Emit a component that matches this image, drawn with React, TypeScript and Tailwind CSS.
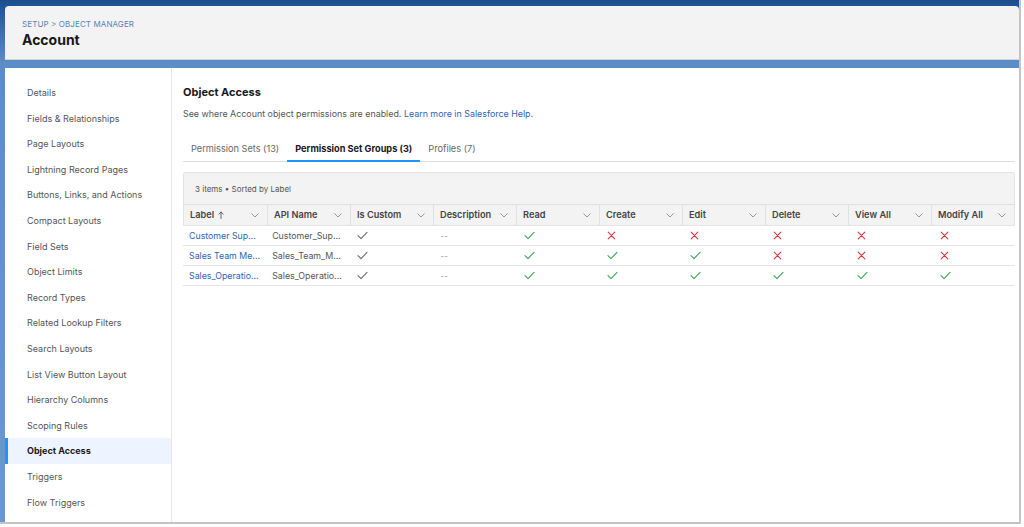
import React from "react";

const navItems = [
  "Details",
  "Fields & Relationships",
  "Page Layouts",
  "Lightning Record Pages",
  "Buttons, Links, and Actions",
  "Compact Layouts",
  "Field Sets",
  "Object Limits",
  "Record Types",
  "Related Lookup Filters",
  "Search Layouts",
  "List View Button Layout",
  "Hierarchy Columns",
  "Scoping Rules",
  "Object Access",
  "Triggers",
  "Flow Triggers",
];

const columns = [
  "Label",
  "API Name",
  "Is Custom",
  "Description",
  "Read",
  "Create",
  "Edit",
  "Delete",
  "View All",
  "Modify All",
];

type Cell = "y" | "n";
const rows: { label: string; api: string; perms: Cell[] }[] = [
  { label: "Customer Sup...", api: "Customer_Sup...", perms: ["y", "n", "n", "n", "n", "n"] },
  { label: "Sales Team Me...", api: "Sales_Team_M...", perms: ["y", "y", "y", "n", "n", "n"] },
  { label: "Sales_Operatio...", api: "Sales_Operatio...", perms: ["y", "y", "y", "y", "y", "y"] },
];

function Check({ color }: { color: string }) {
  return (
    <svg width="11" height="9" viewBox="0 0 11 9" fill="none">
      <path d="M1 4.6 L4 7.6 L10 1.4" stroke={color} strokeWidth="1.1" strokeLinecap="round" strokeLinejoin="round" />
    </svg>
  );
}

function Cross() {
  return (
    <svg width="9" height="9" viewBox="0 0 9 9" fill="none">
      <path d="M1.2 1.2 L7.8 7.8 M7.8 1.2 L1.2 7.8" stroke="#d9363e" strokeWidth="1.1" strokeLinecap="round" />
    </svg>
  );
}

function Chevron() {
  return (
    <svg width="8" height="5" viewBox="0 0 8 5" fill="none">
      <path d="M0.8 0.8 L4 4 L7.2 0.8" stroke="#8a8a8a" strokeWidth="0.9" strokeLinecap="round" strokeLinejoin="round" />
    </svg>
  );
}

function ArrowUp() {
  return (
    <svg width="6" height="8" viewBox="0 0 6 8" fill="none">
      <path d="M3 7.5 V1 M0.8 3.2 L3 1 L5.2 3.2" stroke="#555" strokeWidth="0.9" strokeLinecap="round" strokeLinejoin="round" />
    </svg>
  );
}

export default function App() {
  return (
    <div className="w-[1024px] h-[527px] bg-white overflow-hidden" style={{ fontFamily: "Inter, 'Liberation Sans', sans-serif" }}>
      <div className="w-[1021px] h-[524px] border-r-2 border-b-2 border-[#c4c4c4] bg-gradient-to-b from-[#1b4e8e] via-[#5d8dc6] via-[12%] to-[#6a98cf] pl-[5px] pt-[6px] flex flex-col">
        {/* Header */}
        <div className="h-[54px] bg-[#f3f3f3] rounded-t-[4px] border-b border-[#d4d4d4] pl-[17px] pt-[13px] flex flex-col">
          <div className="text-[8px] leading-[10px] text-[#5a82b6] tracking-[0.1px]">SETUP &gt; OBJECT MANAGER</div>
          <div className="text-[14px] leading-[18px] font-bold text-[#181818] mt-[2px]">Account</div>
        </div>
        <div className="h-[8px] shrink-0" />
        {/* Main */}
        <div className="flex-1 bg-white flex min-h-0">
          {/* Sidebar */}
          <div className="w-[167px] shrink-0 border-r border-[#e6e6e6] pt-[12px]">
            {navItems.map((item) => {
              const active = item === "Object Access";
              return (
                <div
                  key={item}
                  className={
                    active
                      ? "h-[25.6px] flex items-center pl-[19px] bg-[#eef4ff] border-l-[3px] border-[#1b96ff] text-[9px] font-bold text-[#181818]"
                      : "h-[25.6px] flex items-center pl-[22px] text-[9px] text-[#555555]"
                  }
                >
                  {item}
                </div>
              );
            })}
          </div>
          {/* Content */}
          <div className="flex-1 pl-[11px] pr-[4px] pt-[17px] flex flex-col">
            <div className="text-[11px] leading-[14px] font-bold text-[#181818]">Object Access</div>
            <div className="mt-[9px] text-[8.9px] leading-[12px] text-[#555555]">
              See where Account object permissions are enabled.{" "}
              <span className="text-[#2f62b4]">Learn more in Salesforce Help.</span>
            </div>
            {/* Tabs */}
            <div className="mt-[16px] flex border-b border-[#dddddd] h-[26px]">
              <div className="px-2 flex items-center pt-px text-[9.2px] text-[#666666]">Permission Sets (13)</div>
              <div className="px-2 flex items-center pt-px text-[9.2px] font-bold text-[#181818] border-b-2 border-[#1b96ff] -mb-px">
                Permission Set Groups (3)
              </div>
              <div className="px-2 flex items-center pt-px text-[9.2px] text-[#666666]">Profiles (7)</div>
            </div>
            {/* Table card */}
            <div className="mt-[10px] bg-[#f3f3f3] border border-[#e4e4e4] rounded-t-[2px]">
              <div className="h-[31px] flex items-center pl-[11px] text-[8px] text-[#555555]">3 items • Sorted by Label</div>
              <div className="grid grid-cols-10 h-[21px] bg-[#f3f3f3] border-t border-[#e0e0e0]">
                {columns.map((c, i) => (
                  <div
                    key={c}
                    className={
                      (i > 0 ? "border-l border-[#e0e0e0] " : "") +
                      "flex items-center justify-between pl-[6px] pr-[8px] text-[9.2px] font-semibold text-[#444444]"
                    }
                  >
                    <span className="flex items-center gap-[4px]">
                      {c}
                      {c === "Label" && <ArrowUp />}
                    </span>
                    <Chevron />
                  </div>
                ))}
              </div>
            </div>
            <div>
              {rows.map((r) => (
                <div key={r.label} className="grid grid-cols-10 h-[20px] border-b border-[#e5e5e5] bg-white">
                  <div className="flex items-center pl-[6px] text-[8.8px] text-[#2f62b4] whitespace-nowrap overflow-hidden">{r.label}</div>
                  <div className="flex items-center pl-[6px] text-[8.8px] text-[#555555] whitespace-nowrap overflow-hidden">{r.api}</div>
                  <div className="flex items-center pl-[8px]">
                    <Check color="#6b6b6b" />
                  </div>
                  <div className="flex items-center pl-[8px] text-[8px] text-[#999999]">--</div>
                  {r.perms.map((p, i) => (
                    <div key={i} className="flex items-center pl-[8px]">
                      {p === "y" ? <Check color="#3ea55a" /> : <Cross />}
                    </div>
                  ))}
                </div>
              ))}
            </div>
          </div>
        </div>
      </div>
    </div>
  );
}
